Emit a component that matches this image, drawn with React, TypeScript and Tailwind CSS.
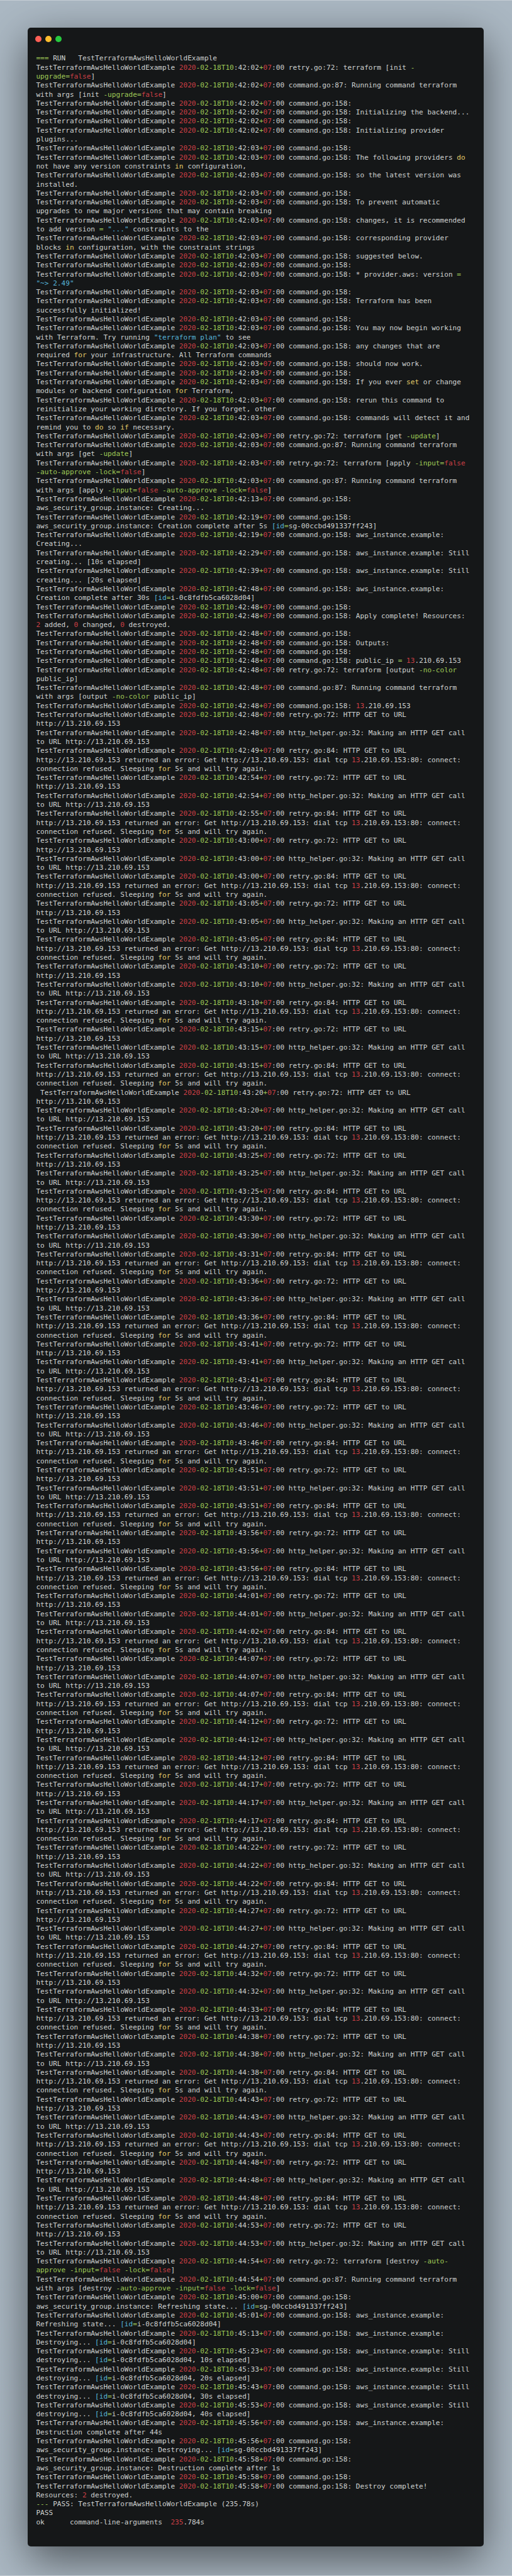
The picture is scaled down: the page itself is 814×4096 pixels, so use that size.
const NAME = 'TestTerraformAwsHelloWorldExample';
const IP = '13.210.69.153';
const SG = 'sg-00ccbd491337ff243';
const EC2 = 'i-0c8fdfb5ca6028d04';

const log = (time: string, text: string) => `${NAME} 2020-02-18T10:${time}+07:00 ${text}`;
const cmd = (time: string, text = '') => log(time, `command.go:158:${text ? ' ' + text : ''}`);

// [retry.go:72 time, http_helper time, retry.go:84 time]
const attempts = [
  ['42:48', '42:48', '42:49'],
  ['42:54', '42:54', '42:55'],
  ['43:00', '43:00', '43:00'],
  ['43:05', '43:05', '43:05'],
  ['43:10', '43:10', '43:10'],
  ['43:15', '43:15', '43:15'],
  ['43:20', '43:20', '43:20'],
  ['43:25', '43:25', '43:25'],
  ['43:30', '43:30', '43:31'],
  ['43:36', '43:36', '43:36'],
  ['43:41', '43:41', '43:41'],
  ['43:46', '43:46', '43:46'],
  ['43:51', '43:51', '43:51'],
  ['43:56', '43:56', '43:56'],
  ['44:01', '44:01', '44:02'],
  ['44:07', '44:07', '44:07'],
  ['44:12', '44:12', '44:12'],
  ['44:17', '44:17', '44:17'],
  ['44:22', '44:22', '44:22'],
  ['44:27', '44:27', '44:27'],
  ['44:32', '44:32', '44:33'],
  ['44:38', '44:38', '44:38'],
  ['44:43', '44:43', '44:43'],
  ['44:48', '44:48', '44:48'],
];

const retryLines = attempts.flatMap(([a, b, c]) => [
  // this one line sits a character further right in the capture
  (a === '43:20' ? ' ' : '') + log(a, `retry.go:72: HTTP GET to URL http://${IP}`),
  log(b, `http_helper.go:32: Making an HTTP GET call to URL http://${IP}`),
  log(c, `retry.go:84: HTTP GET to URL http://${IP} returned an error: Get http://${IP}: dial tcp ${IP}:80: connect: connection refused. Sleeping for 5s and will try again.`),
]);

const lines = [
  `=== RUN   ${NAME}`,
  log('42:02', 'retry.go:72: terraform [init -upgrade=false]'),
  log('42:02', 'command.go:87: Running command terraform with args [init -upgrade=false]'),
  cmd('42:02'),
  cmd('42:02', 'Initializing the backend...'),
  cmd('42:02'),
  cmd('42:02', 'Initializing provider plugins...'),
  cmd('42:03'),
  cmd('42:03', 'The following providers do not have any version constraints in configuration,'),
  cmd('42:03', 'so the latest version was installed.'),
  cmd('42:03'),
  cmd('42:03', 'To prevent automatic upgrades to new major versions that may contain breaking'),
  cmd('42:03', 'changes, it is recommended to add version = "..." constraints to the'),
  cmd('42:03', 'corresponding provider blocks in configuration, with the constraint strings'),
  cmd('42:03', 'suggested below.'),
  cmd('42:03'),
  cmd('42:03', '* provider.aws: version = "~> 2.49"'),
  cmd('42:03'),
  cmd('42:03', 'Terraform has been successfully initialized!'),
  cmd('42:03'),
  cmd('42:03', 'You may now begin working with Terraform. Try running "terraform plan" to see'),
  cmd('42:03', 'any changes that are required for your infrastructure. All Terraform commands'),
  cmd('42:03', 'should now work.'),
  cmd('42:03'),
  cmd('42:03', 'If you ever set or change modules or backend configuration for Terraform,'),
  cmd('42:03', 'rerun this command to reinitialize your working directory. If you forget, other'),
  cmd('42:03', 'commands will detect it and remind you to do so if necessary.'),
  log('42:03', 'retry.go:72: terraform [get -update]'),
  log('42:03', 'command.go:87: Running command terraform with args [get -update]'),
  log('42:03', 'retry.go:72: terraform [apply -input=false -auto-approve -lock=false]'),
  log('42:03', 'command.go:87: Running command terraform with args [apply -input=false -auto-approve -lock=false]'),
  cmd('42:13', 'aws_security_group.instance: Creating...'),
  cmd('42:19', `aws_security_group.instance: Creation complete after 5s [id=${SG}]`),
  cmd('42:19', 'aws_instance.example: Creating...'),
  cmd('42:29', 'aws_instance.example: Still creating... [10s elapsed]'),
  cmd('42:39', 'aws_instance.example: Still creating... [20s elapsed]'),
  cmd('42:48', `aws_instance.example: Creation complete after 30s [id=${EC2}]`),
  cmd('42:48'),
  cmd('42:48', 'Apply complete! Resources: 2 added, 0 changed, 0 destroyed.'),
  cmd('42:48'),
  cmd('42:48', 'Outputs:'),
  cmd('42:48'),
  cmd('42:48', `public_ip = ${IP}`),
  log('42:48', 'retry.go:72: terraform [output -no-color public_ip]'),
  log('42:48', 'command.go:87: Running command terraform with args [output -no-color public_ip]'),
  cmd('42:48', IP),
  ...retryLines,
  log('44:53', `retry.go:72: HTTP GET to URL http://${IP}`),
  log('44:53', `http_helper.go:32: Making an HTTP GET call to URL http://${IP}`),
  log('44:54', 'retry.go:72: terraform [destroy -auto-approve -input=false -lock=false]'),
  log('44:54', 'command.go:87: Running command terraform with args [destroy -auto-approve -input=false -lock=false]'),
  cmd('45:00', `aws_security_group.instance: Refreshing state... [id=${SG}]`),
  cmd('45:01', `aws_instance.example: Refreshing state... [id=${EC2}]`),
  cmd('45:13', `aws_instance.example: Destroying... [id=${EC2}]`),
  cmd('45:23', `aws_instance.example: Still destroying... [id=${EC2}, 10s elapsed]`),
  cmd('45:33', `aws_instance.example: Still destroying... [id=${EC2}, 20s elapsed]`),
  cmd('45:43', `aws_instance.example: Still destroying... [id=${EC2}, 30s elapsed]`),
  cmd('45:53', `aws_instance.example: Still destroying... [id=${EC2}, 40s elapsed]`),
  cmd('45:56', 'aws_instance.example: Destruction complete after 44s'),
  cmd('45:56', `aws_security_group.instance: Destroying... [id=${SG}]`),
  cmd('45:58', 'aws_security_group.instance: Destruction complete after 1s'),
  cmd('45:58'),
  cmd('45:58', 'Destroy complete! Resources: 2 destroyed.'),
  `--- PASS: ${NAME} (235.78s)`,
  'PASS',
  'ok      command-line-arguments  235.784s',
];

const TOKEN =
  /("[^"]*"|\[id|2020|-02-18T10|\+(?=07)|(?<=\+)07|-(?:upgrade|input|auto-approve|lock|no-color|update)\b|===|---|=|\bfalse\b|\b(?:do|in|for|if|set)\b|(?<=tcp |= |158: )13|\b[02](?= (?:added|changed|destroyed))|\b235(?=\.784))/;

function tokenClass(token: string) {
  if (token.startsWith('"') || token === '[id') return 'text-[#55b5db]';
  if (['do', 'in', 'for', 'if', 'set'].includes(token)) return 'text-[#e6cd69]';
  if (/^(2020|07|false|13|0|2|235)$/.test(token)) return 'text-[#cd3f45]';
  return 'text-[#9fca56]';
}

function LogLine({ text }: { text: string }) {
  const parts = text.split(TOKEN);
  return (
    <div>
      {parts.map((part, i) =>
        i % 2 === 1 ? (
          <span key={i} className={tokenClass(part)}>
            {part}
          </span>
        ) : (
          part
        )
      )}
    </div>
  );
}

export default function App() {
  return (
    <div className="h-[4096px] overflow-hidden border-y border-[#c4ccd4] bg-[#abb8c3] px-[44.4px] pt-[43.4px]">
      <div className="w-[724.5px] rounded-[5px] bg-[#151718] pb-[31px] pl-[13px] pr-[18px] pt-[13px] shadow-[0_20px_68px_rgba(0,0,0,0.55)]">
        {/* Window controls */}
        <div className="-ml-[1.2px] flex gap-[5.8px]">
          <div className="h-[10px] w-[10px] rounded-full bg-[#ff5f56]" />
          <div className="h-[10px] w-[10px] rounded-full bg-[#ffbd2e]" />
          <div className="h-[10px] w-[10px] rounded-full bg-[#27c93f]" />
        </div>

        {/* Terminal output */}
        <div className="mt-[19px] whitespace-pre-wrap font-['DejaVu_Sans_Mono',monospace] text-[11.12px] leading-[14.3px] text-[#cfd2d1]">
          {lines.map((line, i) => (
            <LogLine key={i} text={line} />
          ))}
        </div>
      </div>
    </div>
  );
}
